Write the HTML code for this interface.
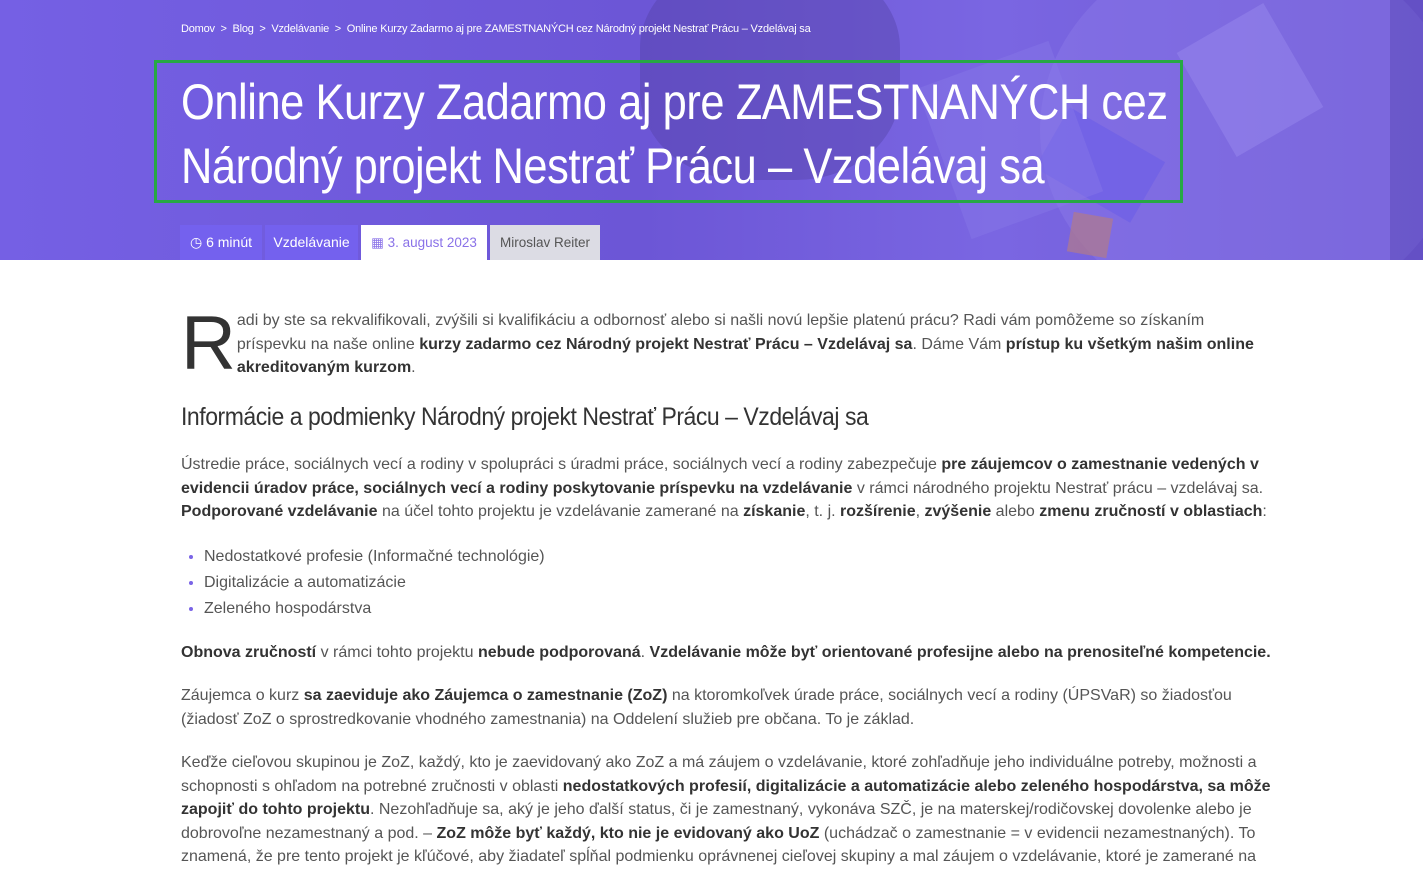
<!DOCTYPE html>
<html><head><meta charset="utf-8"><style>
body{margin:0;width:1423px;height:868px;overflow:hidden;background:#fff;font-family:"Liberation Sans",sans-serif;}
.hero{position:relative;height:260px;background:linear-gradient(90deg,#7560e4 0%,#6c56d6 45%,#7a66e2 70%,#6e58d2 100%);overflow:hidden;}
.hero .s{position:absolute;}
.bc{position:absolute;left:181px;top:23px;color:#fff;font-size:11px;letter-spacing:-0.2px;}
.box{position:absolute;left:154px;top:60px;width:1023px;height:137px;border:3px solid #27a844;}
.title{position:absolute;left:181px;top:70px;color:#fff;font-size:50px;line-height:64px;white-space:nowrap;transform:scaleX(0.868);transform-origin:left top;letter-spacing:-0.5px;}
.meta{position:absolute;left:180px;top:225px;display:flex;height:35px;font-size:14px;}
.meta div{line-height:35px;margin-right:3px;text-align:center;box-sizing:border-box;}
.content{position:absolute;left:181px;top:309px;width:1102px;color:#555;font-size:16px;line-height:23.5px;}
.content b{color:#333;}
.drop{float:left;font-size:76px;line-height:62px;color:#333;margin:4px 1px 0 0;}
h2{font-weight:normal;color:#333;font-size:25px;margin:26px 0 24px;letter-spacing:-0.5px;transform:scaleX(0.92);transform-origin:left;white-space:nowrap;}
p{margin:0 0 20px;}
ul{margin:0 0 19px;padding-left:23px;}
li{line-height:26px;}
li::marker{color:#7a64e6;}
</style></head><body>
<div class="hero">
<div class="s" style="left:1040px;top:-60px;width:420px;height:380px;border-radius:50%;background:#8c7ae8;opacity:.45"></div>
<div class="s" style="left:1390px;top:0;width:40px;height:260px;background:#5a48b8;opacity:.5"></div>
<div class="s" style="left:640px;top:-40px;width:260px;height:220px;border-radius:40%;background:#4c3c9c;opacity:.35"></div>
<div class="s" style="left:1200px;top:20px;width:100px;height:120px;background:#9888ee;opacity:.5;transform:rotate(-30deg)"></div>
<div class="s" style="left:1045px;top:130px;width:110px;height:70px;background:#6a5ee8;opacity:.6;transform:rotate(30deg)"></div>
<div class="s" style="left:1070px;top:215px;width:40px;height:40px;background:#b07a8a;opacity:.7;transform:rotate(10deg)"></div>
<div class="s" style="left:940px;top:60px;width:140px;height:160px;background:#8a7ae8;opacity:.4;transform:rotate(-20deg)"></div>
<div class="bc">Domov &nbsp;&gt;&nbsp; Blog &nbsp;&gt;&nbsp; Vzdelávanie &nbsp;&gt;&nbsp; Online Kurzy Zadarmo aj pre ZAMESTNANÝCH cez Národný projekt Nestrať Prácu – Vzdelávaj sa</div>
<div class="box"></div>
<div class="title">Online Kurzy Zadarmo aj pre ZAMESTNANÝCH cez<br>Národný projekt Nestrať Prácu – Vzdelávaj sa</div>
<div class="meta">
<div style="background:#7461ee;color:#fff;width:82px">&#9719; 6 minút</div>
<div style="background:#7461ee;color:#fff;width:93px">Vzdelávanie</div>
<div style="background:#fff;color:#8a72e8;width:126px;font-size:13.5px">&#9638; 3. august 2023</div>
<div style="background:#dcdce4;color:#555;width:110px;font-size:13.5px">Miroslav Reiter</div>
</div>
</div>
<div class="content">
<p><span class="drop">R</span>adi by ste sa rekvalifikovali, zvýšili si kvalifikáciu a odbornosť alebo si našli novú lepšie platenú prácu? Radi vám pomôžeme so získaním<br>príspevku na naše online <b>kurzy zadarmo cez Národný projekt Nestrať Prácu – Vzdelávaj sa</b>. Dáme Vám <b>prístup ku všetkým našim online akreditovaným kurzom</b>.</p>
<h2>Informácie a podmienky Národný projekt Nestrať Prácu – Vzdelávaj sa</h2>
<p>Ústredie práce, sociálnych vecí a rodiny v spolupráci s úradmi práce, sociálnych vecí a rodiny zabezpečuje <b>pre záujemcov o zamestnanie vedených v evidencii úradov práce, sociálnych vecí a rodiny poskytovanie príspevku na vzdelávanie</b> v rámci národného projektu Nestrať prácu – vzdelávaj sa. <b>Podporované vzdelávanie</b> na účel tohto projektu je vzdelávanie zamerané na <b>získanie</b>, t. j. <b>rozšírenie</b>, <b>zvýšenie</b> alebo <b>zmenu zručností v oblastiach</b>:</p>
<ul><li>Nedostatkové profesie (Informačné technológie)</li><li>Digitalizácie a automatizácie</li><li>Zeleného hospodárstva</li></ul>
<p><b>Obnova zručností</b> v rámci tohto projektu <b>nebude podporovaná</b>. <b>Vzdelávanie môže byť orientované profesijne alebo na prenositeľné kompetencie.</b></p>
<p>Záujemca o kurz <b>sa zaeviduje ako Záujemca o zamestnanie (ZoZ)</b> na ktoromkoľvek úrade práce, sociálnych vecí a rodiny (ÚPSVaR) so žiadosťou (žiadosť ZoZ o sprostredkovanie vhodného zamestnania) na Oddelení služieb pre občana. To je základ.</p>
<p>Keďže cieľovou skupinou je ZoZ, každý, kto je zaevidovaný ako ZoZ a má záujem o vzdelávanie, ktoré zohľadňuje jeho individuálne potreby, možnosti a schopnosti s ohľadom na potrebné zručnosti v oblasti <b>nedostatkových profesií, digitalizácie a automatizácie alebo zeleného hospodárstva, sa môže zapojiť do tohto projektu</b>. Nezohľadňuje sa, aký je jeho ďalší status, či je zamestnaný, vykonáva SZČ, je na materskej/rodičovskej dovolenke alebo je dobrovoľne nezamestnaný a pod. – <b>ZoZ môže byť každý, kto nie je evidovaný ako UoZ</b> (uchádzač o zamestnanie = v evidencii nezamestnaných). To znamená, že pre tento projekt je kľúčové, aby žiadateľ spĺňal podmienku oprávnenej cieľovej skupiny a mal záujem o vzdelávanie, ktoré je zamerané na</p>
</div>
</body></html>
